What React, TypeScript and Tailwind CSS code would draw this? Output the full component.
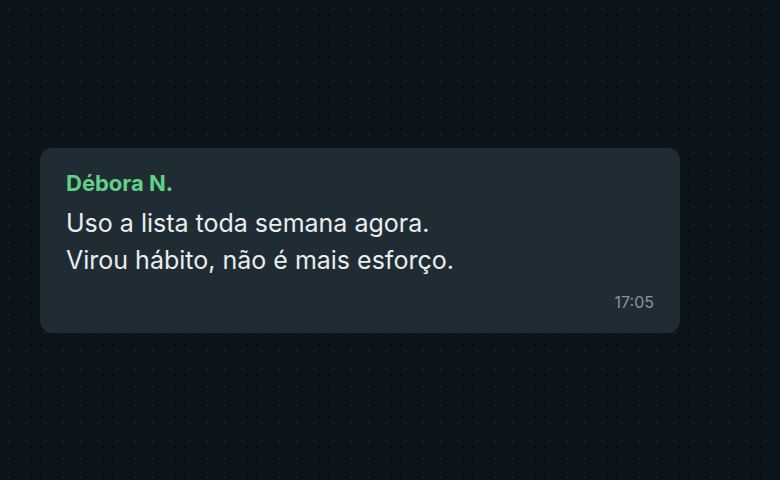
export default function App() {
  return (
    <div
      className="flex h-screen w-full items-center bg-[#0b141a] bg-[radial-gradient(circle,#18232b_1px,transparent_1.2px)] bg-[length:18px_18px] px-10"
      style={{ fontFamily: "Inter, 'Noto Sans', sans-serif" }}
    >
      <div className="w-[640px] rounded-xl bg-[#202c33] px-[26px] pb-[21px] pt-[21px]">
        <div className="text-[22px] font-bold leading-[28px] text-[#63cf89]">
          Débora N.
        </div>
        <p className="mt-[8px] text-[25px] leading-[37px] text-[#e9edef]">
          Uso a lista toda semana agora.
          <br />
          Virou hábito, não é mais esforço.
        </p>
        <div className="mt-[13px] text-right text-[16px] leading-[20px] text-[#8696a0]">
          17:05
        </div>
      </div>
    </div>
  );
}
